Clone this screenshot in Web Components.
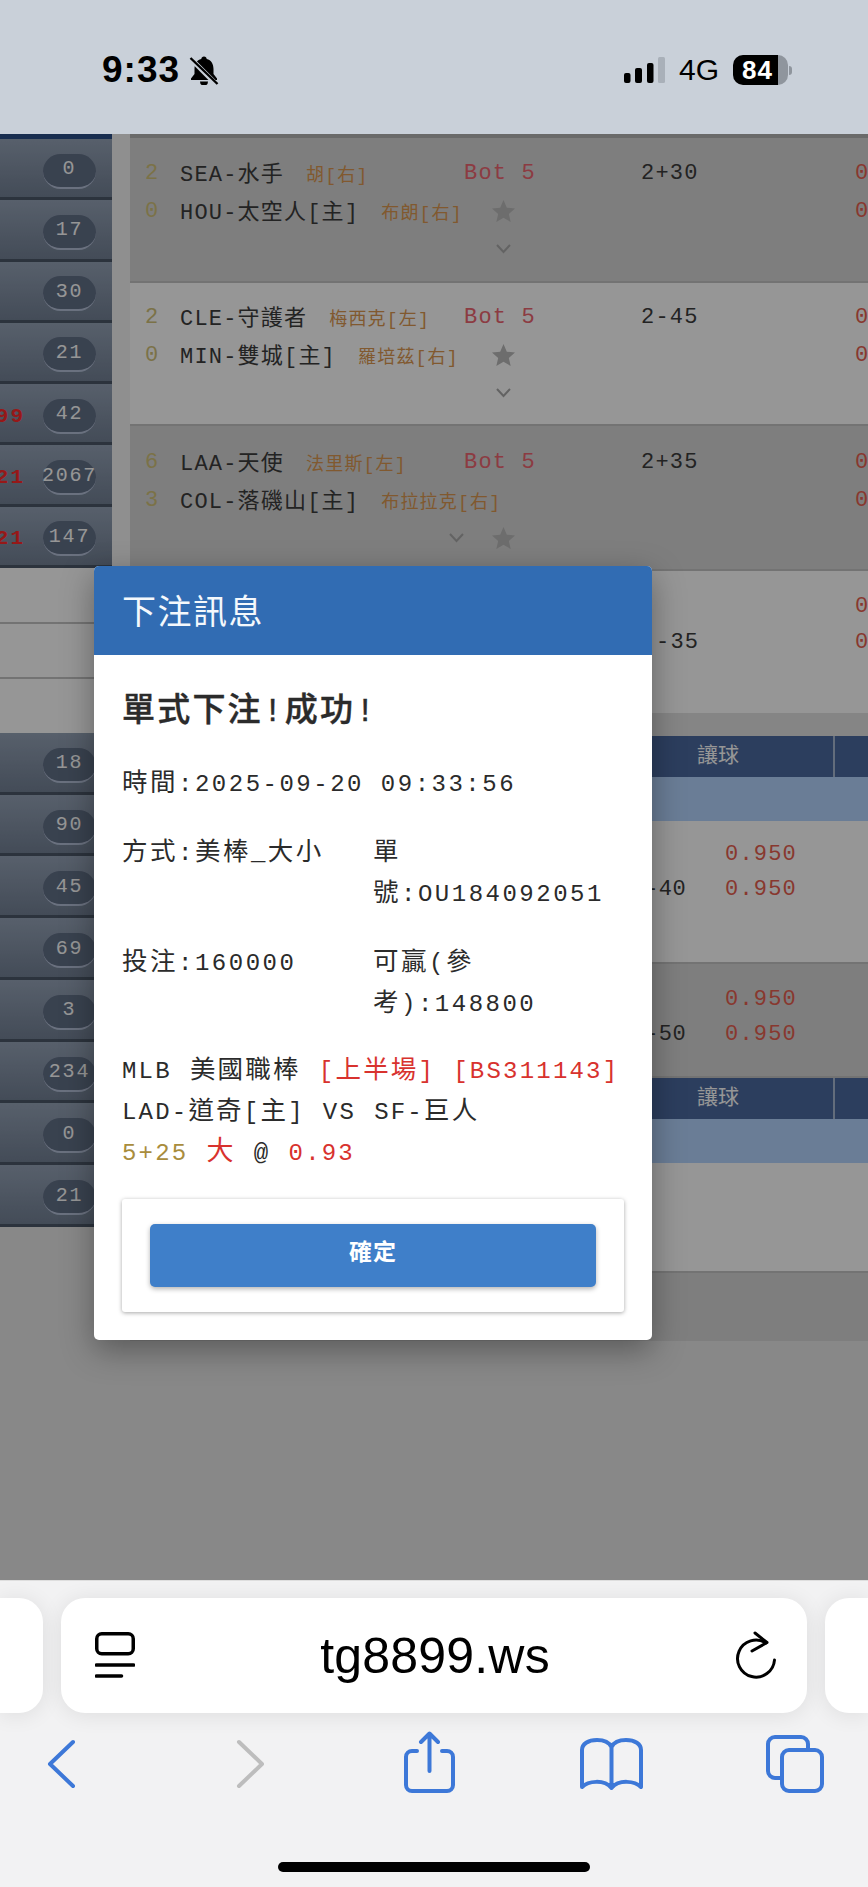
<!DOCTYPE html>
<html lang="zh-Hant">
<head>
<meta charset="utf-8">
<title>下注訊息</title>
<style>
* { box-sizing: border-box; }
html, body { margin: 0; padding: 0; }
body {
    width: 868px;
    height: 1887px;
    overflow: hidden;
    display: flex;
    flex-direction: column;
    font-family: "Liberation Mono", "Noto Sans CJK TC", monospace;
}
.red { color: #d8322e; }
.gold { color: #a98d3d; }
.big { font-size: 27px; }
.c { font-size: 25.5px; }
</style>
</head>
<body>

<status-bar></status-bar>

<bet-page>
    <side-list slot="side">
        <side-row count="0"></side-row>
        <side-row count="17"></side-row>
        <side-row count="30"></side-row>
        <side-row count="21"></side-row>
        <side-row count="42" hot="99"></side-row>
        <side-row count="2067" hot="21"></side-row>
        <side-row count="147" hot="21"></side-row>
        <plain-row style="--h:56px"></plain-row>
        <plain-row style="--h:55px"></plain-row>
        <plain-row style="--h:54px;border-bottom:none"></plain-row>
        <side-row count="18" style="--h:61.75px"></side-row>
        <side-row count="90" style="--h:61.75px"></side-row>
        <side-row count="45" style="--h:61.75px"></side-row>
        <side-row count="69" style="--h:61.75px"></side-row>
        <side-row count="3" style="--h:61.75px"></side-row>
        <side-row count="234" style="--h:61.75px"></side-row>
        <side-row count="0" style="--h:61.75px"></side-row>
        <side-row count="21" style="--h:61.75px"></side-row>
    </side-list>

    <game-row tone="dark" style="--h:149px;--top:16px;border-top:4px solid #b4b4b4">
        <span slot="s1">2</span>
        <team-line slot="t1" pitcher="胡[右]">SEA-水手</team-line>
        <span slot="status">Bot 5</span>
        <span slot="hcp">2+30</span>
        <span slot="o1">0</span>
        <span slot="s2">0</span>
        <team-line slot="t2" pitcher="布朗[右]">HOU-太空人[主]</team-line>
        <ui-icon slot="mark" name="star"></ui-icon>
        <span slot="o2">0</span>
        <ui-icon slot="mark3" name="chevron"></ui-icon>
    </game-row>
    <game-row style="--h:143px;--top:15px">
        <span slot="s1">2</span>
        <team-line slot="t1" pitcher="梅西克[左]">CLE-守護者</team-line>
        <span slot="status">Bot 5</span>
        <span slot="hcp">2-45</span>
        <span slot="o1">0</span>
        <span slot="s2">0</span>
        <team-line slot="t2" pitcher="羅培茲[右]">MIN-雙城[主]</team-line>
        <ui-icon slot="mark" name="star"></ui-icon>
        <span slot="o2">0</span>
        <ui-icon slot="mark3" name="chevron"></ui-icon>
    </game-row>
    <game-row tone="dark" style="--h:145px;--top:17px">
        <span slot="s1">6</span>
        <team-line slot="t1" pitcher="法里斯[左]">LAA-天使</team-line>
        <span slot="status">Bot 5</span>
        <span slot="hcp">2+35</span>
        <span slot="o1">0</span>
        <span slot="s2">3</span>
        <team-line slot="t2" pitcher="布拉拉克[右]">COL-落磯山[主]</team-line>
        <span slot="o2">0</span>
        <ui-icon slot="left3" name="chevron"></ui-icon>
        <ui-icon slot="mark3" name="star"></ui-icon>
    </game-row>
    <game-row style="--h:142px;--top:17px;--lh:36px;border-bottom:none">
        <span slot="o1">0</span>
        <span slot="hcp2">-35</span>
        <span slot="o2">0</span>
    </game-row>
    <spacer-strip></spacer-strip>

    <table-head>讓球</table-head>
    <odds-row style="--h:143px;--top:16px" hcp="-40"></odds-row>
    <odds-row tone="dark" style="--h:114px;--top:18px" hcp="-50"></odds-row>
    <table-head>讓球</table-head>
    <odds-row style="--h:110px" empty></odds-row>
    <odds-row tone="dark" style="--h:68px;border-bottom:none" empty></odds-row>

    <bet-modal slot="modal">
        <span slot="title">下注訊息</span>
        <span slot="result">單式下注!成功!</span>
        <span slot="time"><span class="c">時間</span>:2025-09-20 09:33:56</span>
        <span slot="f1"><span class="c">方式</span>:<span class="c">美棒</span>_<span class="c">大小</span></span>
        <span slot="f2"><span class="c">單</span><span class="c">號</span>:OU184092051</span>
        <span slot="f3"><span class="c">投注</span>:160000</span>
        <span slot="f4"><span class="c">可贏</span>(<span class="c">參</span><span class="c">考</span>):148800</span>
        <div>MLB <span class="c">美國職棒</span> <span class="red">[<span class="c">上半場</span>] [BS311143]</span></div>
        <div>LAD-<span class="c">道奇</span>[<span class="c">主</span>] VS SF-<span class="c">巨人</span></div>
        <div><span class="gold">5+25</span> <span class="red big">大</span> @ <span class="red">0.93</span></div>
        <span slot="action">確定</span>
    </bet-modal>
</bet-page>

<browser-chrome url="tg8899.ws"></browser-chrome>

<script>
class StatusBar extends HTMLElement {
    constructor() {
        super();
        this.attachShadow({ mode: 'open' }).innerHTML = `
        <style>
            :host {
                display: flex;
                flex: none;
                height: 134px;
                padding: 6px 76px 0 102px;
                align-items: center;
                background: #c9d0d9;
                color: #000;
                font-family: "Liberation Sans", sans-serif;
            }
            .time { font-size: 37px; font-weight: 700; letter-spacing: 1px; line-height: 30px; }
            .bell { margin-left: 9px; }
            .fill { flex: 1; }
            .net { font-size: 30px; margin-left: 14px; line-height: 30px; }
            .batt {
                box-sizing: border-box;
                display: flex;
                align-items: center;
                justify-content: center;
                width: 55px;
                height: 30px;
                margin-left: 14px;
                padding-right: 6px;
                border-radius: 10px;
                background: linear-gradient(90deg, #000 82%, #8f959d 82%);
                color: #fff;
                font-size: 26px;
                font-weight: 700;
                letter-spacing: 1px;
            }
            .nub { width: 3px; height: 9px; margin-left: 1px; border-radius: 0 3px 3px 0; background: #8f959d; }
        </style>
        <span class="time">9:33</span>
        <svg class="bell" width="30" height="30" viewBox="0 0 30 30">
            <path d="M15 1.5c1.6 0 2.6 1 2.7 2.4 4.6 1.2 6.8 5 6.8 10v5l3.5 4.6V25H2v-1.5l3.5-4.6v-5c0-5 2.2-8.8 6.8-10 .1-1.4 1.1-2.4 2.7-2.400zM11 26.500h8a4 4 0 0 1-8 0z"/>
            <path d="M3 5l24 24" stroke="#c9d0d9" stroke-width="5"/>
            <path d="M1.500 3l27 26" stroke="#000" stroke-width="2.400"/>
        </svg>
        <span class="fill"></span>
        <svg width="41" height="26" viewBox="0 0 41 26">
            <rect x="0" y="16" width="6.500" height="10" rx="2"/>
            <rect x="11" y="11" width="7" height="15" rx="2"/>
            <rect x="23" y="6" width="6.500" height="20" rx="2"/>
            <rect x="34" y="0" width="7" height="26" rx="1.500" fill="#a9b0b9"/>
        </svg>
        <span class="net">4G</span>
        <span class="batt">84</span>
        <span class="nub"></span>
        `;
    }
}

class BetPage extends HTMLElement {
    constructor() {
        super();
        this.attachShadow({ mode: 'open' }).innerHTML = `
        <style>
            :host {
                display: flex;
                position: relative;
                flex: none;
                height: 1446px;
                background: #e8e8e8;
                overflow: hidden;
            }
            .gap { flex: none; align-self: flex-start; width: 18px; height: 1200px; background: #f4f4f4; }
            .main { flex: 1; min-width: 0; display: flex; flex-direction: column; }
            .dim { position: absolute; inset: 0; background: rgba(0, 0, 0, .41); }
        </style>
        <slot name="side"></slot>
        <div class="gap"></div>
        <div class="main"><slot></slot></div>
        <div class="dim"></div>
        <slot name="modal"></slot>
        `;
    }
}

class SideList extends HTMLElement {
    constructor() {
        super();
        this.attachShadow({ mode: 'open' }).innerHTML = `
        <style>
            :host {
                display: flex;
                flex: none;
                flex-direction: column;
                width: 112px;
                border-top: 5px solid #2c4e88;
            }
        </style>
        <slot></slot>
        `;
    }
}

class SideRow extends HTMLElement {
    constructor() {
        super();
        const hot = this.getAttribute('hot');
        this.attachShadow({ mode: 'open' }).innerHTML = `
        <style>
            :host {
                display: flex;
                flex: none;
                height: var(--h, 61.29px);
                justify-content: flex-end;
                align-items: center;
                padding: 6px 16px 0 0;
                overflow: hidden;
                background: linear-gradient(#95a3b7, #738195);
                border-bottom: 3px solid #4c5869;
                font-size: 20px;
                letter-spacing: 1.8px;
            }
            .hot { flex: none; margin-right: 18px; font-size: 21px; letter-spacing: 2px; color: #ff2a2a; font-weight: 700; }
            .pill {
                box-sizing: border-box;
                flex: none;
                display: flex;
                width: 53px;
                height: 35px;
                padding-bottom: 3px;
                justify-content: center;
                align-items: center;
                border-radius: 18px;
                background: #627087;
                border-bottom: 2px solid #b5c1d9;
                color: #fff;
                white-space: nowrap;
            }
        </style>
        ${hot ? `<span class="hot">${hot}</span>` : ''}
        <span class="pill">${this.getAttribute('count')}</span>
        `;
    }
}

class PlainRow extends HTMLElement {
    constructor() {
        super();
        this.attachShadow({ mode: 'open' }).innerHTML = `
        <style>
            :host {
                display: block;
                flex: none;
                height: var(--h);
                background: #ffffff;
                border-bottom: 2px solid #c4c4c4;
            }
        </style>
        `;
    }
}

class GameRow extends HTMLElement {
    constructor() {
        super();
        this.attachShadow({ mode: 'open' }).innerHTML = `
        <style>
            :host {
                display: grid;
                flex: none;
                height: var(--h);
                padding-top: var(--top);
                grid-template-columns: 50px 284px 177px 214px 13px;
                grid-auto-rows: var(--lh, 38px);
                align-items: center;
                overflow: hidden;
                background: #fff;
                border-bottom: 2px solid #c4c4c4;
                font-size: 22px;
                letter-spacing: 1.2px;
                color: #3c3c3c;
                white-space: nowrap;
            }
            :host([tone="dark"]) { background: #d6d6d6; }
            .score { padding-left: 15px; color: #d2c27a; }
            .status { color: #ee6570; }
            .odds { color: #e85f50; letter-spacing: 0; }
            .mark { padding-left: 27px; display: flex; }
            .left3 { display: flex; justify-content: flex-end; }
            .left3 ::slotted(*) { margin-right: -5px; }
        </style>
        <div class="score"><slot name="s1"></slot></div>
        <div><slot name="t1"></slot></div>
        <div class="status"><slot name="status"></slot></div>
        <div><slot name="hcp"></slot></div>
        <div class="odds"><slot name="o1"></slot></div>

        <div class="score"><slot name="s2"></slot></div>
        <div><slot name="t2"></slot></div>
        <div class="mark"><slot name="mark"></slot></div>
        <div style="padding-left:15px"><slot name="hcp2"></slot></div>
        <div class="odds"><slot name="o2"></slot></div>

        <div></div>
        <div class="left3"><slot name="left3"></slot></div>
        <div class="mark"><slot name="mark3"></slot></div>
        `;
    }
}

class TeamLine extends HTMLElement {
    constructor() {
        super();
        this.attachShadow({ mode: 'open' }).innerHTML = `
        <style>
            :host { display: inline-block; margin-bottom: 3px; white-space: nowrap; }
            .p { margin-left: 22px; font-size: 18px; letter-spacing: 1.2px; color: #dc9850; }
        </style>
        <slot></slot><span class="p">${this.getAttribute('pitcher')}</span>
        `;
    }
}

class UiIcon extends HTMLElement {
    constructor() {
        super();
        const star = this.getAttribute('name') === 'star';
        this.attachShadow({ mode: 'open' }).innerHTML = `
        <style>
            :host { display: inline-flex; }
            svg { display: block; }
        </style>
        ${star
            ? `<svg width="25" height="24" viewBox="0 0 25 24"><path fill="#b9b9b9" d="M12.500 1l3.300 7.700 8.200.7-6.200 5.500 1.900 8.100-7.200-4.300-7.200 4.300 1.900-8.100L1 9.400l8.200-.7z"/></svg>`
            : `<svg width="25" height="12" viewBox="0 0 25 12"><path fill="none" stroke="#a8a8a8" stroke-width="2" d="M6 2l6.500 7L19 2"/></svg>`}
        `;
    }
}

class SpacerStrip extends HTMLElement {
    constructor() {
        super();
        this.attachShadow({ mode: 'open' }).innerHTML = `
        <style>
            :host { display: block; flex: none; height: 23px; background: #e2e2e2; }
        </style>
        `;
    }
}

class TableHead extends HTMLElement {
    constructor() {
        super();
        this.attachShadow({ mode: 'open' }).innerHTML = `
        <style>
            :host { display: block; flex: none; font-family: "Noto Sans CJK TC", sans-serif; }
            .top { display: flex; height: 41px; padding-left: 567px; background: #4b6aa0; color: #fff; font-size: 21px; }
            .cell { box-sizing: border-box; width: 138px; line-height: 34px; border-right: 2px solid #a9bad3; }
            .sub { height: 44px; background: #b4d4ff; }
        </style>
        <div class="top"><div class="cell"><slot></slot></div></div>
        <div class="sub"></div>
        `;
    }
}

class OddsRow extends HTMLElement {
    constructor() {
        super();
        const lines = this.hasAttribute('empty') ? '' : `
            <span></span><span class="o">0.950</span>
            <span class="h">${this.getAttribute('hcp')}</span><span class="o">0.950</span>`;
        this.attachShadow({ mode: 'open' }).innerHTML = `
        <style>
            :host {
                display: grid;
                flex: none;
                height: var(--h);
                padding: var(--top, 0) 0 0 497px;
                grid-template-columns: 59px 1fr;
                grid-auto-rows: 35px;
                column-gap: 39px;
                align-items: center;
                background: #fff;
                border-bottom: 2px solid #c4c4c4;
                font-size: 22px;
                letter-spacing: 1.2px;
                color: #3c3c3c;
            }
            :host([tone="dark"]) { background: #d6d6d6; }
            .h { text-align: right; white-space: nowrap; letter-spacing: .4px; }
            .o { color: #e85f50; }
        </style>
        ${lines}
        `;
    }
}

class BetModal extends HTMLElement {
    constructor() {
        super();
        this.attachShadow({ mode: 'open' }).innerHTML = `
        <style>
            :host {
                display: block;
                position: absolute;
                top: 432px;
                left: 94px;
                width: 558px;
                border-radius: 5px;
                overflow: hidden;
                background: #fff;
                box-shadow: 0 10px 32px rgba(0, 0, 0, .35);
                color: #2b2b2b;
                font-size: 24px;
                letter-spacing: 2.5px;
                line-height: 41px;
            }
            .head {
                height: 89px;
                padding-left: 28px;
                background: #316cb3;
                color: #f4f8fc;
                font-family: "Noto Sans CJK TC", sans-serif;
                font-size: 34px;
                letter-spacing: 1.5px;
                line-height: 87px;
            }
            .body { padding: 34px 28px 28px; }
            .result { font-size: 33px; font-weight: 500; letter-spacing: 2.2px; line-height: 48px; -webkit-text-stroke: .4px #2b2b2b; }
            .time { margin-top: 27px; }
            .cols { display: grid; grid-template-columns: 1fr 1fr; row-gap: 28px; margin-top: 28px; }
            .cols > div { min-width: 0; }
            .slip { margin-top: 26px; letter-spacing: 2.2px; word-spacing: 1.5px; white-space: nowrap; }
            .card {
                margin-top: 25px;
                padding: 25px 28px;
                border-radius: 3px;
                box-shadow: 0 1px 4px rgba(0, 0, 0, .35);
            }
            .btn {
                height: 63px;
                border-radius: 5px;
                background: #3f7fc9;
                box-shadow: 0 2px 5px rgba(0, 0, 0, .3);
                color: #fff;
                font-size: 23px;
                font-weight: 700;
                letter-spacing: 1px;
                line-height: 60px;
                text-align: center;
            }
        </style>
        <div class="head"><slot name="title"></slot></div>
        <div class="body">
            <div class="result"><slot name="result"></slot></div>
            <div class="time"><slot name="time"></slot></div>
            <div class="cols">
                <div><slot name="f1"></slot></div>
                <div><slot name="f2"></slot></div>
                <div><slot name="f3"></slot></div>
                <div><slot name="f4"></slot></div>
            </div>
            <div class="slip"><slot></slot></div>
            <div class="card"><div class="btn"><slot name="action"></slot></div></div>
        </div>
        `;
    }
}

class BrowserChrome extends HTMLElement {
    constructor() {
        super();
        this.attachShadow({ mode: 'open' }).innerHTML = `
        <style>
            :host {
                display: block;
                flex: none;
                height: 307px;
                padding-top: 17px;
                background: #f2f2f3;
                border-top: 1px solid #dedede;
                font-family: "Liberation Sans", sans-serif;
            }
            .tabs { display: flex; gap: 18px; height: 115px; }
            .tab { flex: none; width: 43px; background: #fff; box-shadow: 0 2px 22px rgba(0, 0, 0, .09); }
            .tab.l { border-radius: 0 24px 24px 0; }
            .tab.r { border-radius: 24px 0 0 24px; }
            .url {
                flex: 1;
                display: flex;
                align-items: center;
                justify-content: space-between;
                padding: 0 30px 0 34px;
                border-radius: 24px;
                background: #fff;
                box-shadow: 0 2px 22px rgba(0, 0, 0, .09);
                color: #000;
                font-size: 50px;
                letter-spacing: .2px;
            }
            .url svg { display: block; flex: none; }
            .bar { display: flex; margin-top: 18px; }
            .bar svg { display: block; flex: none; }
            .home { width: 312px; height: 10px; margin: 67px auto 0; border-radius: 5px; background: #000; }
        </style>
        <div class="tabs">
            <div class="tab l"></div>
            <div class="url">
                <svg width="40" height="48" viewBox="0 0 40 48" fill="none" stroke="#000">
                    <rect x="1.750" y="1.750" width="36.500" height="20" rx="5" stroke-width="3.500"/>
                    <path d="M1.500 33h37M1.500 44h25" stroke-width="3.600" stroke-linecap="round"/>
                </svg>
                <span>${this.getAttribute('url')}</span>
                <svg width="42" height="50" viewBox="0 0 42 50" fill="none" stroke="#000" stroke-width="3" stroke-linecap="round" stroke-linejoin="round">
                    <path d="M31 12A18.500 18.500 0 1 0 39.500 29"/>
                    <path d="M20 2l12 9.500L17 20"/>
                </svg>
            </div>
            <div class="tab r"></div>
        </div>
        <div class="bar">
            <svg style="margin-left:47px" width="29" height="64" viewBox="0 0 29 64" fill="none" stroke="#3d78d8" stroke-width="4" stroke-linecap="round" stroke-linejoin="round">
                <path d="M26 11L3 33l23 22"/>
            </svg>
            <svg style="margin-left:160px" width="29" height="64" viewBox="0 0 29 64" fill="none" stroke="#bdbdbd" stroke-width="4" stroke-linecap="round" stroke-linejoin="round">
                <path d="M3 11l23 22L3 55"/>
            </svg>
            <svg style="margin-left:138px" width="53" height="64" viewBox="0 0 53 64" fill="none" stroke="#3d78d8" stroke-width="4" stroke-linecap="round" stroke-linejoin="round">
                <path d="M14 20H9a6 6 0 0 0-6 6v28a6 6 0 0 0 6 6h35a6 6 0 0 0 6-6V26a6 6 0 0 0-6-6h-5"/>
                <path d="M26.500 40V3M18 11l8.500-8.500L35 11"/>
            </svg>
            <svg style="margin-left:122px" width="67" height="64" viewBox="0 0 67 64" fill="none" stroke="#3d78d8" stroke-width="4" stroke-linecap="round" stroke-linejoin="round">
                <path d="M33.500 16C31 11 26 9 19 9 10 9 4 13 4 19v37c6-6 22-8 29.500 1C41 48 57 50 63 56V19C63 13 57 9 48 9c-7 0-12 2-14.500 7v40"/>
            </svg>
            <svg style="margin-left:119px" width="62" height="64" viewBox="0 0 62 64" fill="none" stroke="#3d78d8" stroke-width="4" stroke-linejoin="round">
                <path d="M16 47h-5a7 7 0 0 1-7-7V13a7 7 0 0 1 7-7h26a7 7 0 0 1 7 7v5"/>
                <rect x="18" y="19" width="40" height="41" rx="7"/>
            </svg>
        </div>
        <div class="home"></div>
        `;
    }
}

customElements.define('status-bar', StatusBar);
customElements.define('bet-page', BetPage);
customElements.define('side-list', SideList);
customElements.define('side-row', SideRow);
customElements.define('plain-row', PlainRow);
customElements.define('game-row', GameRow);
customElements.define('team-line', TeamLine);
customElements.define('ui-icon', UiIcon);
customElements.define('spacer-strip', SpacerStrip);
customElements.define('table-head', TableHead);
customElements.define('odds-row', OddsRow);
customElements.define('bet-modal', BetModal);
customElements.define('browser-chrome', BrowserChrome);
</script>
</body>
</html>
